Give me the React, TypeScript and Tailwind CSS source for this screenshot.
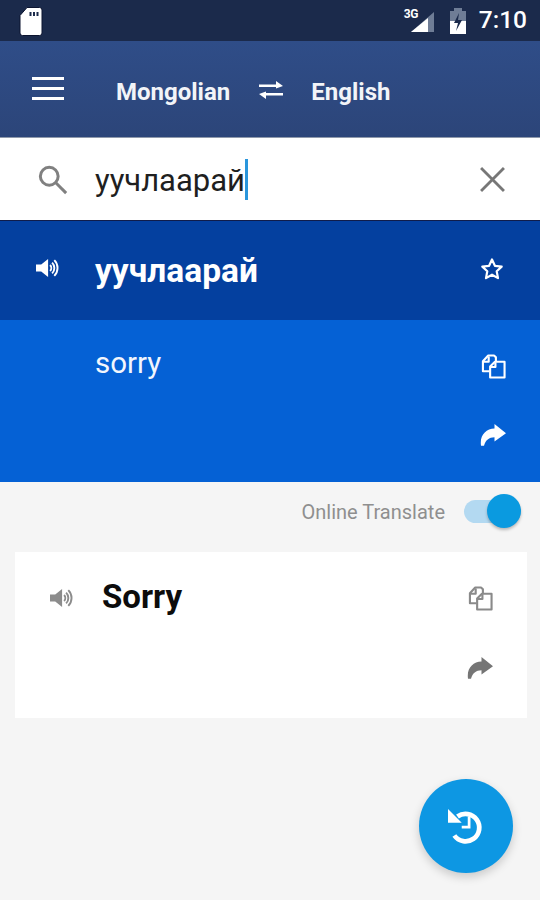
import React from "react";

const Speaker = ({ color, className }: { color: string; className: string }) => (
  <svg viewBox="0 0 24 24" className={className} fill="none">
    <path d="M0.5 8.6h5.2L12.6 3v18l-6.9-5.6H0.5z" fill={color} />
    <path d="M14.6 9a4.4 4.4 0 0 1 0 6M16.6 6.6a7.600 7.600 0 0 1 0 10.800M18.800 4.200a11 11 0 0 1 0 15.600" stroke={color} strokeWidth="1.9" />
  </svg>
);

const Copy = ({ color, className }: { color: string; className: string }) => (
  <svg viewBox="0 0 26 26" className={className} fill="none" stroke={color} strokeWidth="2.2" strokeLinejoin="round">
    <path d="M9 18H2V7.5L7.5 1.5H13.5L15.5 3.5V8" />
    <path d="M2.5 8H8V2.5" />
    <path d="M9.5 24.5V13L14.5 8H24.5V24.5Z" />
    <path d="M10 13.500H15V8.500" />
  </svg>
);

const Share = ({ color, className }: { color: string; className: string }) => (
  <svg viewBox="0 0 26 22" className={className}>
    <path d="M14.500 0L26 9.200 14.500 17.500v-4.300C9 13.200 5.500 16 4 21.800L1 21.800C-0.500 11 6 4.800 14.500 4.500z" fill={color} />
  </svg>
);

export default function App() {
  return (
    <div className="relative flex h-[900px] w-[540px] flex-col overflow-hidden bg-[#f5f5f5] font-['Roboto',sans-serif]">
      <div className="flex h-[41px] items-center justify-between bg-[#1b2a4b] pl-[19px] pr-[13px]">
        <svg viewBox="0 0 24 30" className="h-[30px] w-[24px]">
          <path d="M8 1.5h12.500a2.500 2.500 0 0 1 2.500 2.500v23a2.500 2.500 0 0 1-2.500 2.500h-17a2.500 2.500 0 0 1-2.500-2.500V9.500z" fill="#fff" stroke="#0c1430" strokeWidth="1" />
          <path d="M10.500 6h2v4h-2zM14 6h2v4h-2zM17.500 6h2v4h-2z" fill="#1b2a4b" />
        </svg>
        <div className="flex items-center">
          <div className="relative h-[26px] w-[30px]">
            <span className="absolute left-[-1px] top-[-1px] text-[12px] font-bold leading-[14px] tracking-[-0.5px] text-white">3G</span>
            <svg viewBox="0 0 28 26" className="absolute left-[3px] top-[1px] h-[26px] w-[28px]">
              <path d="M26 3v20H3z" fill="#6f7d96" />
              <path d="M20 9v14H3z" fill="#fff" />
            </svg>
          </div>
          <svg viewBox="0 0 18 26" className="ml-[14px] h-[26px] w-[18px]">
            <path d="M5 0h8v3h4v23H1V3h4z" fill="#6f7d96" />
            <path d="M1 13h16v13H1z" fill="#fff" />
            <path d="M10 5l-5 10h4l-2 8 6-11H9z" fill="#1b2a4b" />
          </svg>
          <span className="ml-[12px] text-[24.5px] font-medium leading-none text-white">7:10</span>
        </div>
      </div>

      <div className="flex h-[97px] items-center bg-gradient-to-b from-[#2f4d88] to-[#2c4579] pb-[2px] pl-[32px] shadow-[inset_0_-1px_0_#8f99ab]">
        <div className="flex h-[23px] w-[32px] flex-col justify-between">
          <div className="h-[3px] bg-white" />
          <div className="h-[3px] bg-white" />
          <div className="h-[3px] bg-white" />
        </div>
        <span className="ml-[52px] mt-[6px] text-[24px] font-bold leading-none text-[#f2f4f8]">Mongolian</span>
        <svg viewBox="0 0 24 18" className="ml-[29px] mt-[2px] h-[18px] w-[24px]" fill="#fff">
          <path d="M0 3.500h17V0l7 5-7 2.500V6H0z" />
          <path d="M24 12H7v-1.500L0 13l7 5v-3.500h17z" />
        </svg>
        <span className="ml-[28px] mt-[6px] text-[24px] font-bold leading-none text-[#f2f4f8]">English</span>
      </div>

      <div className="flex h-[83px] items-center border-b border-[#101c4a] bg-white pl-[38px] pr-[35px]">
        <svg viewBox="0 0 32 32" className="mt-[2px] h-[30px] w-[30px]" fill="none" stroke="#808080" strokeWidth="3.2">
          <circle cx="12" cy="12" r="9.5" />
          <path d="M19 19l11 11" />
        </svg>
        <div className="ml-[27px] flex flex-1 items-center">
          <span className="mt-[2px] text-[31px] leading-none text-[#1f1f1f]">уучлаарай</span>
          <div className="h-[41px] w-[3px] bg-[#2a96dc]" />
        </div>
        <svg viewBox="0 0 24 24" className="h-[25px] w-[25px]" fill="none" stroke="#777" strokeWidth="2.7">
          <path d="M1 1l22 22M23 1L1 23" />
        </svg>
      </div>

      <div className="flex h-[99px] items-center bg-[#04409f] pb-[4px] pl-[35px] pr-[36px]">
        <Speaker color="#fff" className="mb-[2px] h-[24px] w-[25px]" />
        <span className="ml-[35px] mt-[4px] flex-1 text-[33.5px] font-bold leading-none text-white">уучлаарай</span>
        <svg viewBox="0 0 24 24" className="h-[24px] w-[24px]" fill="none" stroke="#fff" strokeWidth="2.2" strokeLinejoin="round">
          <path d="M12 2.500l2.900 6.300 6.800.8-5 4.700 1.300 6.800-6-3.400-6 3.400 1.300-6.800-5-4.700 6.800-.8z" />
        </svg>
      </div>

      <div className="flex h-[162px] justify-between bg-[#0561d5] pl-[95px] pr-[34px]">
        <span className="mt-[27px] text-[29.5px] leading-[32px] text-[#f2f6fd]">sorry</span>
        <div className="flex flex-col items-center pt-[34px]">
          <Copy color="#fff" className="h-[25px] w-[25px]" />
          <Share color="#fff" className="mt-[45px] h-[22px] w-[26px]" />
        </div>
      </div>

      <div className="flex h-[58px] items-center justify-end pr-[19px]">
        <span className="mr-[19px] mt-[2px] text-[20px] leading-none text-[#8f8f8f]">Online Translate</span>
        <div className="relative h-[23px] w-[57px] rounded-full bg-[#b3d9f1]">
          <div className="absolute right-0 top-[-5.500px] h-[34px] w-[34px] rounded-full bg-[#0a9ae0] shadow-[0_2px_3px_rgba(0,0,0,0.25)]" />
        </div>
      </div>

      <div className="ml-[15px] mr-[13px] mt-[12px] flex h-[166px] justify-between bg-white pl-[34px] pr-[34px]">
        <div className="flex items-start">
          <Speaker color="#8c8c8c" className="mt-[34px] h-[24px] w-[25px]" />
          <span className="ml-[28px] mt-[26px] text-[33px] font-bold leading-[38px] text-[#0c0c0c]">Sorry</span>
        </div>
        <div className="flex flex-col items-center pt-[34px]">
          <Copy color="#8a8a8a" className="h-[25px] w-[25px]" />
          <Share color="#757575" className="mt-[46px] h-[22px] w-[26px]" />
        </div>
      </div>

      <div className="absolute left-[419px] top-[779px] flex h-[94px] w-[94px] items-center justify-center rounded-full bg-[#0d97e3] shadow-[0_4px_10px_rgba(0,0,0,0.18)]">
        <svg viewBox="0 0 36 36" className="mb-[1px] ml-[1px] h-[38px] w-[38px]" fill="none" stroke="#fff">
          <path d="M9 9a13 13 0 1 1 -3 18" strokeWidth="4.500" />
          <path d="M0 2v13h13z" fill="#fff" stroke="none" />
          <path d="M20 9v10h-7" strokeWidth="2.600" />
        </svg>
      </div>
    </div>
  );
}
